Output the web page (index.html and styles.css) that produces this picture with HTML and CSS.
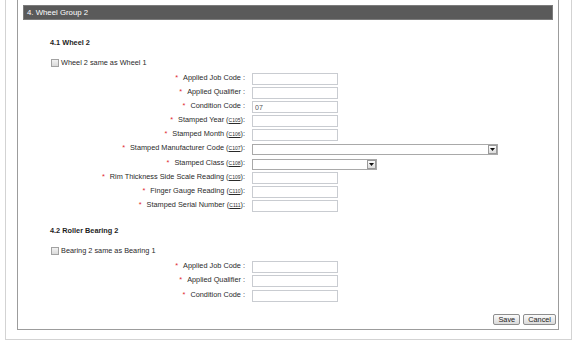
FILE: index.html
```html
<!DOCTYPE html>
<html lang="en">
<head>
    <meta charset="UTF-8">
    <meta name="viewport" content="width=device-width, initial-scale=1.0">
    <title>Wheel Group 2</title>
    <link rel="stylesheet" href="styles.css">
</head>
<body>
    <div class="page">
        <div class="panel">
            <div class="panel-title">4. Wheel Group 2</div>

            <section class="group">
                <h3>4.1 Wheel 2</h3>
                <label class="same-as"><span class="check"></span>Wheel 2 same as Wheel 1</label>
                <div class="fields">
                    <label><span class="req">*</span>Applied Job Code :</label>
                    <input type="text">
                    <label><span class="req">*</span>Applied Qualifier :</label>
                    <input type="text">
                    <label><span class="req">*</span>Condition Code :</label>
                    <input type="text" value="07">
                    <label><span class="req">*</span>Stamped Year (<a href="#">C105</a>):</label>
                    <input type="text">
                    <label><span class="req">*</span>Stamped Month (<a href="#">C106</a>):</label>
                    <input type="text">
                    <label><span class="req">*</span>Stamped Manufacturer Code (<a href="#">C107</a>):</label>
                    <div class="select select-long"><span class="select-btn"><svg width="5" height="3" viewBox="0 0 5 3"><path d="M0 0H5L2.5 3Z" fill="#111"/></svg></span></div>
                    <label><span class="req">*</span>Stamped Class (<a href="#">C108</a>):</label>
                    <div class="select select-short"><span class="select-btn"><svg width="5" height="3" viewBox="0 0 5 3"><path d="M0 0H5L2.5 3Z" fill="#111"/></svg></span></div>
                    <label><span class="req">*</span>Rim Thickness Side Scale Reading (<a href="#">C109</a>):</label>
                    <input type="text">
                    <label><span class="req">*</span>Finger Gauge Reading (<a href="#">C110</a>):</label>
                    <input type="text">
                    <label><span class="req">*</span>Stamped Serial Number (<a href="#">C111</a>):</label>
                    <input type="text">
                </div>
            </section>

            <section class="group group-second">
                <h3>4.2 Roller Bearing 2</h3>
                <label class="same-as"><span class="check"></span>Bearing 2 same as Bearing 1</label>
                <div class="fields">
                    <label><span class="req">*</span>Applied Job Code :</label>
                    <input type="text">
                    <label><span class="req">*</span>Applied Qualifier :</label>
                    <input type="text">
                    <label><span class="req">*</span>Condition Code :</label>
                    <input type="text">
                </div>
            </section>

            <div class="actions">
                <button type="button">Save</button>
                <button type="button">Cancel</button>
            </div>
        </div>
    </div>
</body>
</html>
```

FILE: styles.css
```css
body {
    margin: 0;
    font-family: "Liberation Sans", Arial, sans-serif;
    font-size: 7.33px;
    color: #2a2a2a;
    background: #fff;
}
.page {
    box-sizing: border-box;
    width: 567px;
    margin-left: 5px;
    padding: 0 12px 9px 11px;
    border: 1px solid #d3d3d3;
    border-top: none;
}
.panel {
    border: 1px solid #9c9c9c;
    border-top: none;
    padding: 5px 2px 4px 5px;
}
.panel-title {
    box-sizing: border-box;
    height: 15px;
    margin-right: 3px;
    padding-left: 3px;
    background: #5a5a5a;
    border: 1px solid #7c7c7c;
    color: #fff;
    font-size: 7.8px;
    line-height: 13px;
}
.group {
    padding-left: 27px;
}
h3 {
    margin: 18px 0 0;
    font-size: 7.33px;
    line-height: 10px;
    color: #1e1e1e;
}
.group-second h3 {
    margin-top: 14.5px;
}
.same-as {
    display: flex;
    align-items: center;
    height: 10px;
    margin-top: 10px;
    line-height: 10px;
}
.check {
    box-sizing: border-box;
    width: 8px;
    height: 8px;
    margin: 0 2px 0 1px;
    border: 1px solid #a2a2a2;
    background: linear-gradient(#f2f2f2, #dadada);
}
.fields {
    display: grid;
    grid-template-columns: 195px auto;
    column-gap: 7px;
    row-gap: 2.1px;
    margin-top: 5px;
    justify-items: start;
    align-items: start;
}
.fields label {
    justify-self: end;
    line-height: 9px;
    white-space: nowrap;
}
.req {
    margin-right: 5px;
    color: #e0262c;
}
.fields a {
    font-size: 5px;
    color: #2a2a2a;
}
input {
    box-sizing: border-box;
    width: 86px;
    height: 12px;
    margin: 0;
    padding: 0 2px;
    border: 1px solid #c9ccd1;
    font-family: inherit;
    font-size: 7px;
    color: #555;
}
input:focus {
    outline: none;
}
.select {
    box-sizing: border-box;
    display: flex;
    justify-content: flex-end;
    align-items: center;
    height: 11px;
    margin-top: 1px;
    border: 1px solid #a9a9a9;
    background: #fff;
}
.select-long {
    width: 246px;
}
.select-short {
    width: 125px;
}
.select-btn {
    box-sizing: border-box;
    display: flex;
    justify-content: center;
    align-items: center;
    width: 9px;
    height: 9px;
    border: 1px solid #9a9a9a;
    background: linear-gradient(#fdfdfd, #dcdcdc);
}
.actions {
    display: flex;
    justify-content: flex-end;
    gap: 3px;
    margin-top: 12px;
}
button {
    box-sizing: border-box;
    height: 11px;
    padding: 0 4px;
    border: 1px solid #8e8e8e;
    border-radius: 2px;
    background: linear-gradient(#fbfbfb, #dadada);
    font-family: inherit;
    font-size: 7.33px;
    line-height: 9px;
    color: #222;
}
```
